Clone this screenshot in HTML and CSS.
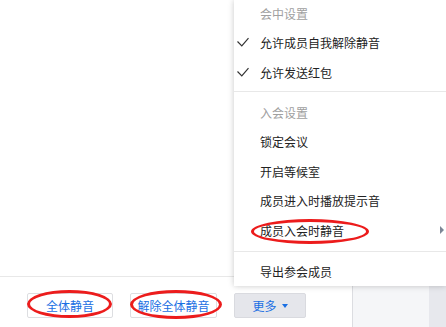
FILE: index.html
```html
<!DOCTYPE html>
<html lang="zh-CN">
<head>
<meta charset="utf-8">
<title>成员管理</title>
<link rel="stylesheet" href="styles.css">
</head>
<body>
<div class="app">
  <div class="main">
    <div class="content"></div>
    <div class="toolbar">
      <button class="btn w1">全体静音</button>
      <button class="btn w2">解除全体静音</button>
      <button class="btn more">更多<span class="caret"></span></button>
    </div>
  </div>
  <div class="side"><div class="track"></div></div>

  <div class="menu">
    <div class="group g1">
      <div class="header">会中设置</div>
      <div class="item checked"><svg class="check" width="12" height="10" viewBox="0 0 12 10"><polyline points="0.5,4.5 4.8,8.8 11.5,1.2" fill="none" stroke="#333" stroke-width="1.2"/></svg><span>允许成员自我解除静音</span></div>
      <div class="item checked"><svg class="check" width="12" height="10" viewBox="0 0 12 10"><polyline points="0.5,4.5 4.8,8.8 11.5,1.2" fill="none" stroke="#333" stroke-width="1.2"/></svg><span>允许发送红包</span></div>
    </div>
    <div class="group g2">
      <div class="header h2">入会设置</div>
      <div class="item plain">锁定会议</div>
      <div class="item plain">开启等候室</div>
      <div class="item plain">成员进入时播放提示音</div>
      <div class="item plain sub">成员入会时静音<span class="arrow"></span></div>
    </div>
    <div class="group g3">
      <div class="item plain">导出参会成员</div>
    </div>
  </div>

  <div class="mark m1"></div>
  <div class="mark m2"></div>
  <div class="mark m3"></div>
</div>
</body>
</html>
```
FILE: styles.css
```css
* { box-sizing: border-box; }
html, body { margin: 0; padding: 0; }
body {
  width: 446px;
  height: 327px;
  overflow: hidden;
  background: #fff;
  font-family: "Noto Sans CJK SC", "Noto Sans", sans-serif;
  font-size: 12px;
  color: #222;
}
.app {
  position: relative;
  width: 446px;
  height: 327px;
  display: flex;
}
.main {
  width: 353px;
  height: 327px;
  border-right: 1px solid #dcdde1;
  display: flex;
  flex-direction: column;
}
.content { flex: 1; }
.toolbar {
  height: 51px;
  border-top: 1px solid #e8e8e8;
  padding: 16px 0 0 27px;
  display: flex;
  align-items: flex-start;
  gap: 17px;
}
.btn {
  height: 25px;
  padding: 0;
  border: 1px solid #dddee1;
  border-radius: 2px;
  background: #fff;
  color: #1a6fe3;
  font-family: inherit;
  font-size: 12px;
  line-height: 23px;
  display: flex;
  align-items: center;
  justify-content: center;
}
.w1 { width: 86px; }
.w2 { width: 87px; }
.more {
  width: 72px;
  background: #e5e6eb;
  border-color: #d9dadf;
}
.caret {
  width: 0;
  height: 0;
  margin-left: 5px;
  border-left: 3px solid transparent;
  border-right: 3px solid transparent;
  border-top: 4px solid #1a6fe3;
}
.side {
  flex: 1;
  background: #f5f6f8;
  display: flex;
  justify-content: flex-end;
}
.track {
  width: 17px;
  background: #e7e8ed;
}

.menu {
  position: absolute;
  left: 234px;
  top: 0;
  width: 212px;
  height: 286px;
  background: #fff;
  box-shadow: 0 0 6px rgba(0, 0, 0, 0.22);
}
.group + .group { border-top: 1px solid #e8e8e8; }
.g1 { padding-bottom: 4px; }
.g2 { padding: 5px 0 6px; }
.g3 { padding-top: 4px; }
.header {
  height: 27px;
  padding-left: 26px;
  color: #a0a0a0;
  display: flex;
  align-items: center;
}
.h2 { height: 30px; }
.item {
  height: 30px;
  display: flex;
  align-items: center;
  color: #222;
  position: relative;
}
.g2 .item { height: 29.5px; }
.item.checked { padding-left: 3px; }
.check { margin-right: 11px; flex: none; }
.item.plain { padding-left: 26px; }
.arrow {
  position: absolute;
  right: 2px;
  top: 50%;
  margin-top: -4px;
  width: 0;
  height: 0;
  border-top: 4px solid transparent;
  border-bottom: 4px solid transparent;
  border-left: 4px solid #7d8796;
}

.mark {
  position: absolute;
  border: 3px solid #ec1c1c;
  border-radius: 50%;
}
.m1 { left: 27px; top: 290px; width: 85px; height: 28px; }
.m2 { left: 130px; top: 290px; width: 92px; height: 29px; }
.m3 { left: 251px; top: 219px; width: 118px; height: 25px; }
```
